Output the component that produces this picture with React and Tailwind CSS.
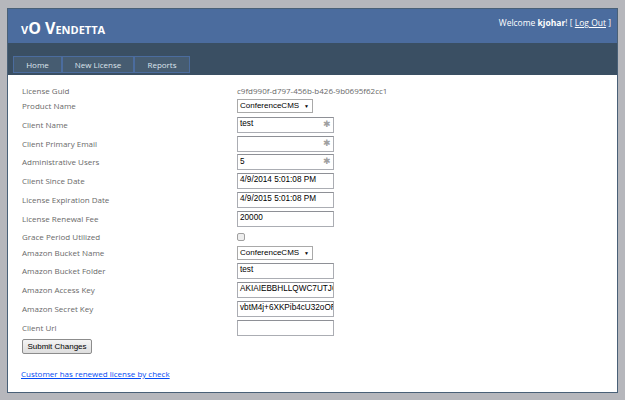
import React from "react";

const ui = { fontFamily: '"Open Sans", "Noto Sans", Arial, sans-serif' };
const arial = { fontFamily: '"Liberation Sans", Arial, sans-serif' };

function TextBox({ value, required }) {
  return (
    <div className="relative w-[97px] h-[16px] bg-white border border-[#abadb3] border-t-[#8e9096] flex items-center overflow-hidden">
      <span className="pl-[2px] text-[8.2px] leading-none text-black whitespace-nowrap" style={arial}>
        {value}
      </span>
      {required && (
        <span className="absolute right-[2px] top-[2px] text-[9px] leading-none text-[#a0a0a0]" style={arial}>
          ✱
        </span>
      )}
    </div>
  );
}

function Select({ value }) {
  return (
    <div className="w-[76px] h-[14px] bg-white border border-[#a9a9a9] flex items-center justify-between pl-[2px] pr-[3px]">
      <span className="text-[8px] leading-none text-black whitespace-nowrap" style={arial}>{value}</span>
      <span className="text-[5px] leading-none text-black">▼</span>
    </div>
  );
}

function Row({ label, h, children }) {
  return (
    <div className={`flex items-center shrink-0 ${h}`}>
      <div className="w-[215px] text-[8px] leading-none text-[#696969]" style={ui}>{label}</div>
      <div className="flex items-center">{children}</div>
    </div>
  );
}

export default function App() {
  const tabs = [
    { name: "Home", w: "w-[49px]" },
    { name: "New License", w: "w-[72px]" },
    { name: "Reports", w: "w-[56px]" },
  ];

  return (
    <div className="w-[625px] h-[400px] bg-[#b6b7bc] pt-[8px] pl-[7px]">
      <div className="w-[611px] h-[385px] bg-white border border-[#496077] flex flex-col overflow-hidden">
        <div className="bg-[#4b6c9e] h-[34px] shrink-0 flex items-start justify-between">
          <h1
            className="text-white font-bold text-[16px] leading-none pl-[13px] pt-[11px]"
            style={{ ...ui, fontVariant: "small-caps" }}
          >
            vO Vendetta
          </h1>
          <div className="text-white text-[8.5px] leading-none pt-[10px] pr-[6px]" style={ui}>
            Welcome <span className="font-bold">kjohar</span>! [ <span className="underline">Log Out</span> ]
          </div>
        </div>
        <div className="bg-[#3a4f63] h-[32px] shrink-0 flex items-end pl-[5px] pb-[2px]">
          {tabs.map((t) => (
            <div
              key={t.name}
              className={`${t.w} h-[17px] bg-[#465c71] border border-[#4b6c9e] flex items-center justify-center text-[8px] text-[#dde4ec]`}
              style={ui}
            >
              {t.name}
            </div>
          ))}
        </div>
        <div className="pl-[14px] pt-[9px] flex flex-col">
          <Row label="License Guid" h="h-[13px]">
            <span className="text-[8px] leading-none text-[#696969]" style={ui}>c9fd990f-d797-456b-b426-9b0695f62cc1</span>
          </Row>
          <Row label="Product Name" h="h-[18px]"><Select value="ConferenceCMS" /></Row>
          <Row label="Client Name" h="h-[19px]"><TextBox value="test" required /></Row>
          <Row label="Client Primary Email" h="h-[19px]"><TextBox value="" required /></Row>
          <Row label="Administrative Users" h="h-[18px]"><TextBox value="5" required /></Row>
          <Row label="Client Since Date" h="h-[19px]"><TextBox value="4/9/2014 5:01:08 PM" /></Row>
          <Row label="License Expiration Date" h="h-[19px]"><TextBox value="4/9/2015 5:01:08 PM" /></Row>
          <Row label="License Renewal Fee" h="h-[19px]"><TextBox value="20000" /></Row>
          <Row label="Grace Period Utilized" h="h-[17px]">
            <div className="w-[8px] h-[8px] rounded-[2px] border border-[#a0a0a0] bg-[#eeeeee]" />
          </Row>
          <Row label="Amazon Bucket Name" h="h-[16px]"><Select value="ConferenceCMS" /></Row>
          <Row label="Amazon Bucket Folder" h="h-[19px]"><TextBox value="test" /></Row>
          <Row label="Amazon Access Key" h="h-[19px]"><TextBox value="AKIAIEBBHLLQWC7UTJ6" /></Row>
          <Row label="Amazon Secret Key" h="h-[19px]"><TextBox value="vbtM4j+6XKPib4cU32oOR" /></Row>
          <Row label="Client Url" h="h-[19px]"><TextBox value="" /></Row>
          <button
            className="mt-[2px] w-[70px] h-[15px] border border-[#8c8c8c] rounded-[2px] bg-gradient-to-b from-[#f4f4f4] to-[#dedede] text-[8px] leading-none text-black"
            style={arial}
          >
            Submit Changes
          </button>
          <div className="mt-[12px] -ml-[1px] h-[10px] leading-[10px]">
            <span className="text-[8px] text-[#034af3] underline" style={ui}>Customer has renewed license by check</span>
          </div>
        </div>
      </div>
    </div>
  );
}
